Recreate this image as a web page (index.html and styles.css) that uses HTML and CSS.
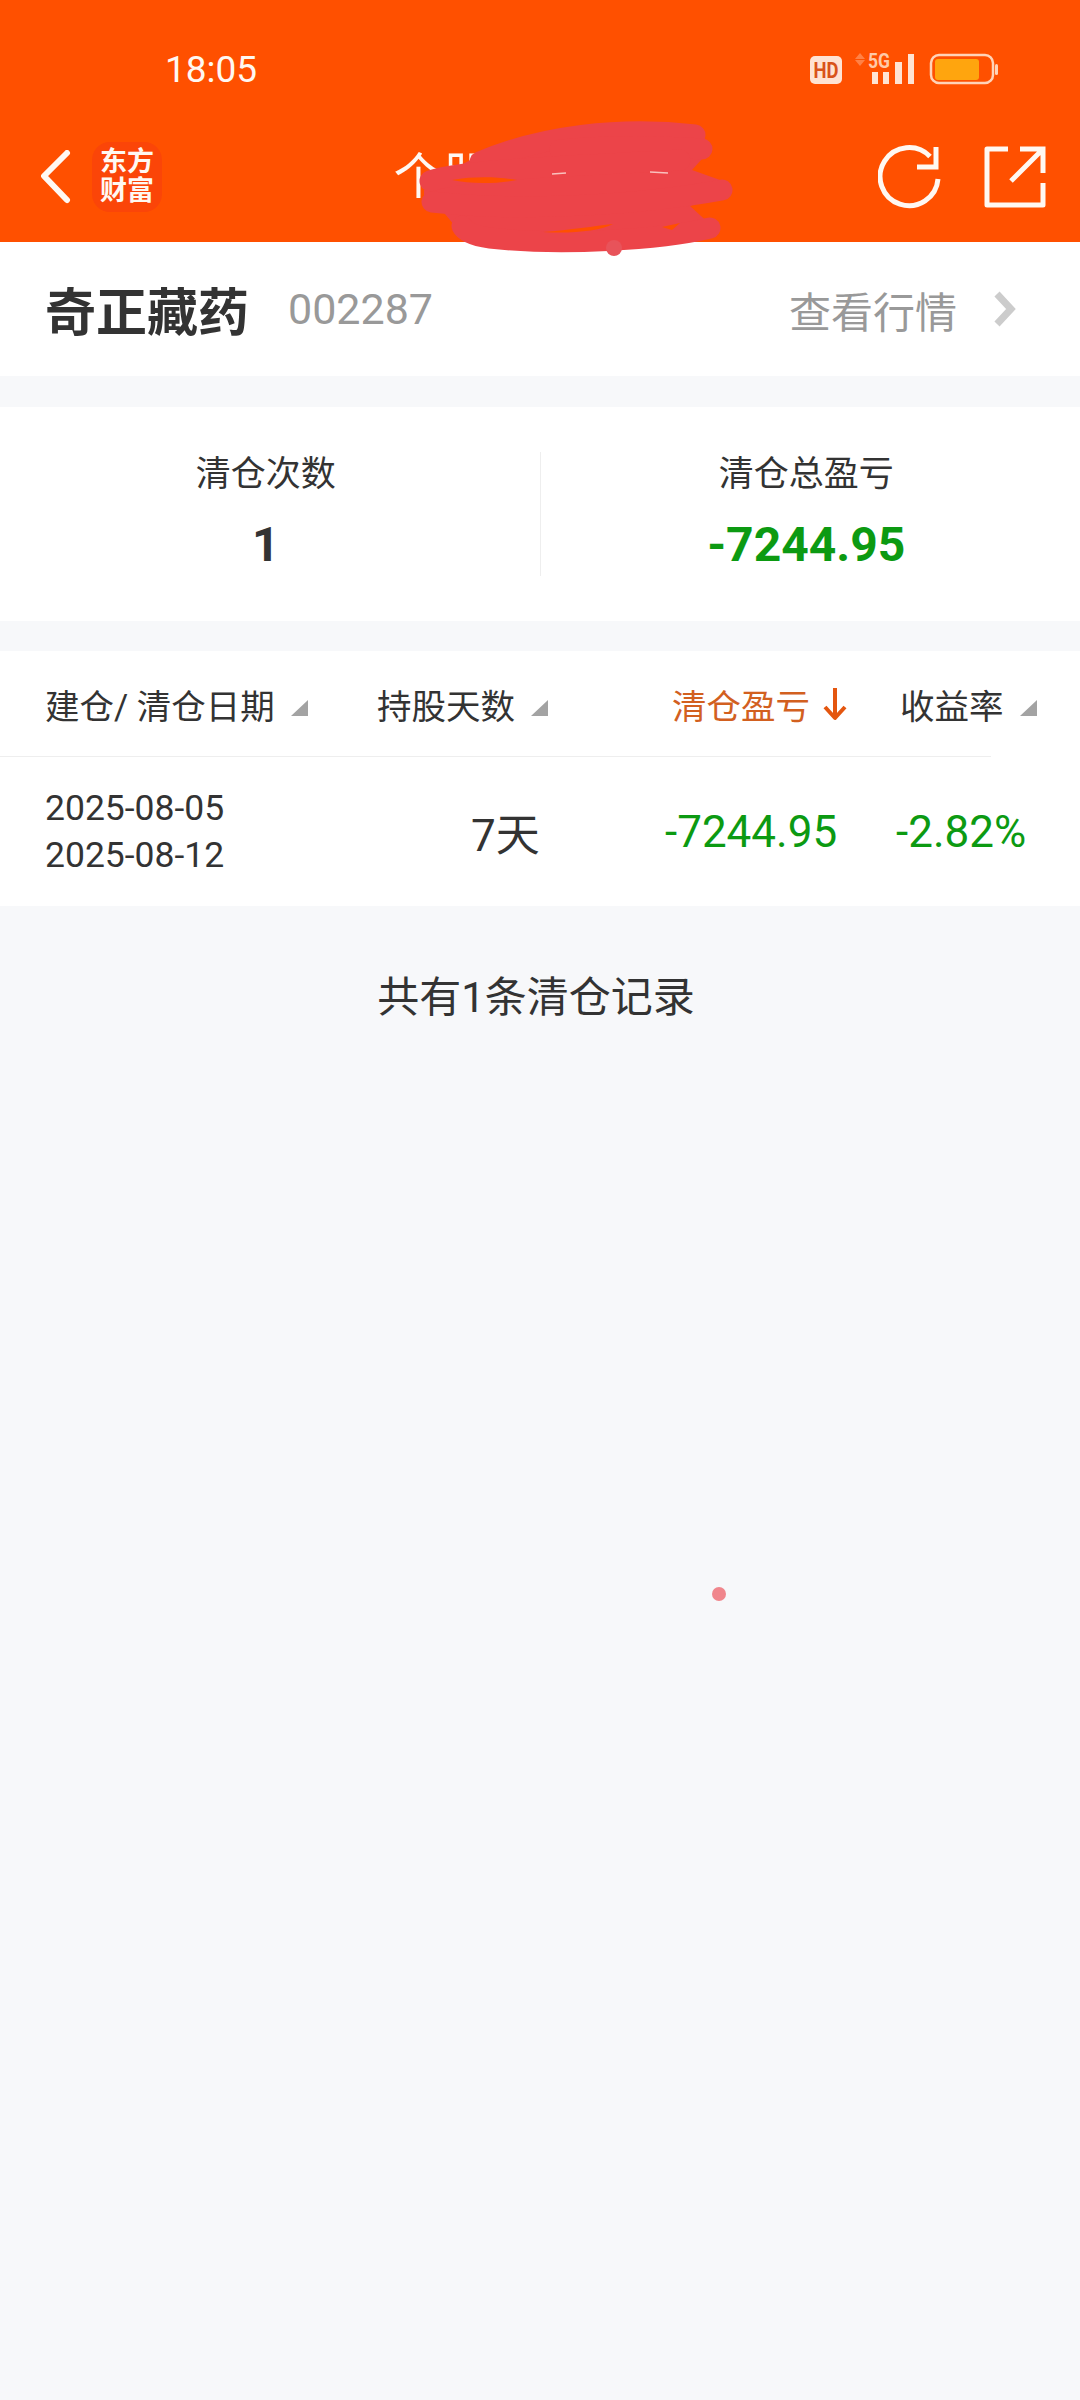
FILE: index.html
```html
<!DOCTYPE html>
<html>

<head>
  <meta charset="utf-8">
  <title>个股清仓记录</title>
  <link rel="stylesheet" href="styles.css">
</head>

<body>
  <header class="top">
    <div class="status">
      <span class="time">18:05</span>
      <svg class="status-icons" width="190" height="50" viewBox="0 -6 190 50">
        <rect x="0" y="5" width="32" height="28" rx="5" fill="#ffe3d3" />
        <text class="hd" x="16" y="27" text-anchor="middle" textLength="25" lengthAdjust="spacingAndGlyphs">HD</text>
        <path d="M50 2l5 6H45zM50 15l5-6H45z" fill="#ff8146" />
        <text class="net" x="69" y="17" text-anchor="middle" textLength="22" lengthAdjust="spacingAndGlyphs">5G</text>
        <path d="M62 21h6v12h-6zM73 21h6v12h-6zM85 11h7v22h-7zM98 3h6v30h-6z" fill="#ffe3d3" />
        <rect x="121" y="4" width="62" height="28" rx="8" fill="none" stroke="#ffd3b8" stroke-width="2.500" />
        <rect x="125" y="8" width="44" height="21" rx="3" fill="#ffa50e" />
        <rect x="185" y="13" width="3" height="11" rx="1.500" fill="#ffd3b8" />
      </svg>
    </div>
    <nav class="bar">
      <div class="bar-left">
        <svg width="30" height="54" viewBox="0 0 30 54">
          <path d="M26 3L3 26l23 24" fill="none" stroke="#fff8f2" stroke-width="6" stroke-linecap="round" stroke-linejoin="round" />
        </svg>
        <div class="logo">东方<br>财富</div>
      </div>
      <div class="title">个股清仓记录</div>
      <div class="bar-right">
        <svg width="64" height="64" viewBox="0 0 64 64">
          <path d="M60 34A29 29 0 1 1 52 11.500" fill="none" stroke="#fff8f2" stroke-width="5" />
          <path d="M58 2v20H39" fill="none" stroke="#fff8f2" stroke-width="5" />
        </svg>
        <svg width="62" height="62" viewBox="0 0 62 62">
          <path d="M24 3H3v56h56V37" fill="none" stroke="#fff8f2" stroke-width="5" stroke-linejoin="round" />
          <path d="M27 35L58 4M36 3h23v24" fill="none" stroke="#fff8f2" stroke-width="5" />
        </svg>
      </div>
    </nav>
  </header>

  <main>
    <section class="stock">
      <b class="name">奇正藏药</b>
      <span class="code">002287</span>
      <span class="quote">查看行情</span>
      <svg width="24" height="36" viewBox="0 0 24 36">
        <path d="M4 3l14 15L4 33" fill="none" stroke="#cccccc" stroke-width="7" />
      </svg>
    </section>

    <section class="summary">
      <div class="cell">
        <div class="label">清仓次数</div>
        <div class="value">1</div>
      </div>
      <div class="cell split">
        <div class="label">清仓总盈亏</div>
        <div class="value green">-7244.95</div>
      </div>
    </section>

    <section class="records">
      <div class="head">
        <div class="col date">建仓/ 清仓日期<i class="tri"></i></div>
        <div class="col days">持股天数<i class="tri"></i></div>
        <div class="col pnl">清仓盈亏
          <svg width="24" height="34" viewBox="0 0 24 34">
            <path d="M12 1v29M2 20l10 11 10-11" fill="none" stroke="#e4560f" stroke-width="4" stroke-linejoin="round" />
          </svg>
        </div>
        <div class="col rate">收益率<i class="tri"></i></div>
      </div>
      <div class="row">
        <div class="col date dates">2025-08-05<br>2025-08-12</div>
        <div class="col days big">7天</div>
        <div class="col pnl big green">-7244.95</div>
        <div class="col rate big green">-2.82%</div>
      </div>
    </section>

    <p class="total">共有1条清仓记录</p>
  </main>

  <!-- 涂抹痕迹 -->
  <svg class="scribble" width="1080" height="2400" viewBox="0 0 1080 2400">
    <path d="M436 178L480 155L560 134L660 126L700 128L710 150L692 170L720 180L730 192L690 206L712 226L660 238L580 246L490 240L460 232L450 220L440 208L424 208L424 190Z" fill="#ec4449" />
    <g fill="none" stroke="#ec4449" stroke-width="21" stroke-linecap="round" stroke-linejoin="round">
      <path d="M480 162C540 136 620 126 695 135" />
      <path d="M560 150C620 145 660 147 702 149" />
      <path d="M430 181C470 168 600 165 680 160" />
      <path d="M432 202C520 212 640 205 722 190" />
      <path d="M710 228C660 240 560 246 490 238C475 236 465 232 462 226" />
    </g>
    <!-- 涂抹缝隙 -->
    <path d="M452 180C475 176 500 177 517 180C495 184 470 184 452 180Z" fill="#ff5000" />
    <path d="M543 232C570 230 595 226 613 224C600 231 570 234 543 232Z" fill="#ff5000" />
    <path d="M662 227L680 223L672 230Z" fill="#ff5000" />
    <path d="M552 174L566 173M650 172L668 173" fill="none" stroke="#fff6f0" stroke-width="1.500" stroke-opacity="0.700" />
    <circle cx="614" cy="248" r="8" fill="#e8535a" />
    <circle cx="719" cy="1594" r="7" fill="#f0868c" />
  </svg>
</body>

</html>
```

FILE: styles.css
```css
* {
  box-sizing: border-box;
}

body {
  margin: 0;
  min-height: 2400px;
  position: relative;
  overflow: hidden;
  background-color: #f7f8fa;
  color: #333;
  font-family: Roboto, "Noto Sans CJK SC", sans-serif;
}

/* 顶部 */
.top {
  height: 242px;
  background-color: #ff5000;
  color: #fff8f2;
}

.status {
  display: flex;
  align-items: center;
  justify-content: space-between;
  height: 100px;
  padding: 40px 80px 0 165px;
}

.time {
  font-size: 37px;
  line-height: 60px;
}

.hd {
  font: bold 22px Roboto, sans-serif;
  fill: #d9531a;
}

.net {
  font: bold 20px Roboto, sans-serif;
  fill: #ffc9a8;
}

.bar {
  display: grid;
  grid-template-columns: 1fr auto 1fr;
  align-items: center;
  height: 142px;
  padding: 12px 34px 0 41px;
}

.bar-left {
  display: flex;
  align-items: center;
  gap: 21px;
}

.logo {
  width: 70px;
  height: 70px;
  padding-top: 6px;
  border-radius: 18px;
  background-color: #fb4508;
  text-align: center;
  font-size: 27px;
  font-weight: bold;
  line-height: 29px;
}

.title {
  font-size: 50px;
  line-height: 60px;
}

.bar-right {
  display: flex;
  align-items: center;
  justify-content: flex-end;
  gap: 42px;
}

/* 股票名称 */
.stock {
  display: flex;
  align-items: center;
  height: 134px;
  padding: 0 63px 0 45px;
  background-color: #fff;
}

.name {
  font-size: 51px;
}

.code {
  margin-left: 39px;
  color: #999;
  font-size: 43px;
}

.quote {
  margin-left: auto;
  margin-right: 36px;
  color: #999;
  font-size: 42px;
}

/* 汇总 */
.summary {
  display: flex;
  align-items: center;
  height: 214px;
  margin-top: 31px;
  background-color: #fff;
}

.cell {
  flex: 1;
  height: 124px;
  padding-right: 8px;
  text-align: center;
}

.split {
  border-left: 1px solid #eee;
}

.label {
  height: 60px;
  font-size: 35px;
  line-height: 46px;
}

.value {
  font-size: 48px;
  font-weight: bold;
  line-height: 66px;
}

.green {
  color: #0c9a12;
}

/* 清仓记录 */
.records {
  margin-top: 30px;
  background-color: #fff;
}

.head {
  display: grid;
  grid-template-columns: 377px 295px 228px 1fr;
  align-items: center;
  height: 106px;
  position: relative;
  font-size: 34.500px;
}

.head::after {
  content: "";
  position: absolute;
  left: 0;
  bottom: 0;
  width: 991px;
  border-bottom: 1px solid #eee;
}

.row {
  display: grid;
  grid-template-columns: 378px 287px 231px 1fr;
  align-items: center;
  height: 149px;
}

.date {
  padding-left: 45px;
}

.dates {
  padding-top: 1px;
  font-size: 35.500px;
  line-height: 47px;
}

.big {
  padding-top: 1px;
  font-size: 44px;
}

.row .days {
  padding-left: 93px;
}

.head .pnl {
  display: flex;
  align-items: center;
  gap: 13px;
  color: #d2601f;
}

.tri {
  display: inline-block;
  margin-left: 16px;
  border-left: 17px solid transparent;
  border-bottom: 16px solid #a3a3a3;
}

.head .tri {
  vertical-align: 3px;
}

.total {
  margin: 64px 0 0;
  text-align: center;
  padding-right: 8px;
  font-size: 42px;
  line-height: 56px;
}

.scribble {
  position: absolute;
  top: 0;
  left: 0;
  pointer-events: none;
}
```
